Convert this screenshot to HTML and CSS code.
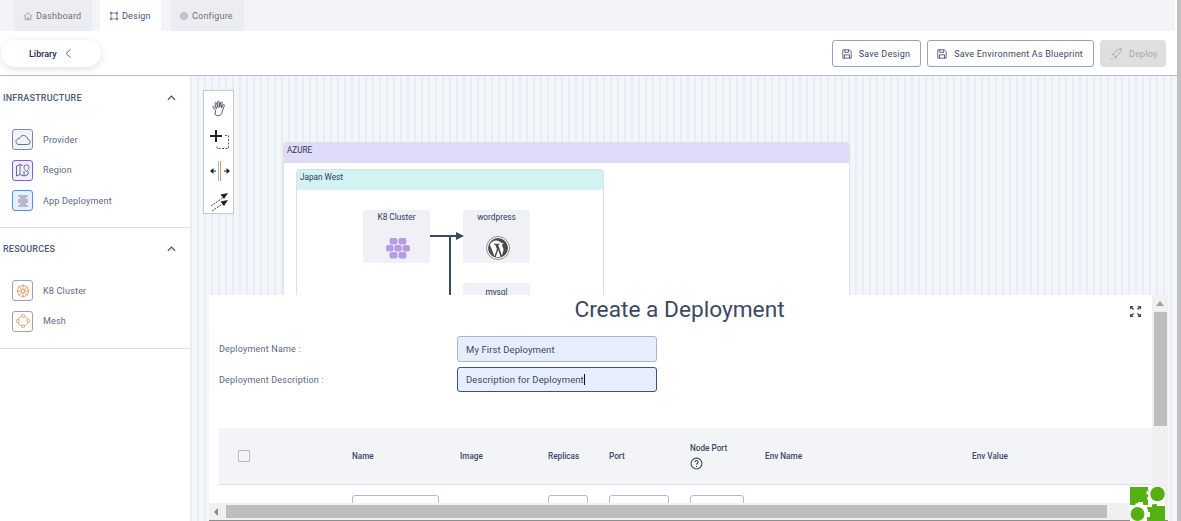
FILE: index.html
```html
<!DOCTYPE html>
<html lang="en">
<head>
  <meta charset="UTF-8">
  <title>Design</title>
  <link rel="stylesheet" href="styles.css">
</head>
<body>
  <div class="app">
    <!-- Tabs -->
    <div class="tabs">
      <div class="tab">
        <svg class="tab-icon" viewBox="0 0 12 12"><path d="M1 6.5 6 2l5 4.500M2.500 5.500V10.500h7V5.500M5 10.500V8h2v2.500"/></svg>
        Dashboard
      </div>
      <div class="tab tab-active">
        <svg class="tab-icon" viewBox="0 0 12 12"><path d="M3 2.500h6M3 9.500h6M2.500 3v6M9.500 3v6"/><rect x="1.500" y="1.500" width="2" height="2"/><rect x="8.500" y="1.500" width="2" height="2"/><rect x="1.500" y="8.500" width="2" height="2"/><rect x="8.500" y="8.500" width="2" height="2"/></svg>
        Design
      </div>
      <div class="tab">
        <svg class="tab-icon" viewBox="0 0 12 12"><circle cx="6" cy="6" r="1.700"/><circle cx="6" cy="6" r="3.800"/><path d="M6 1v1.200M6 9.800V11M1 6h1.200M9.800 6H11M2.500 2.500l.9.900M8.600 8.600l.9.900M2.500 9.500l.9-.9M8.600 3.400l.9-.9"/></svg>
        Configure
      </div>
    </div>

    <!-- Toolbar -->
    <div class="toolbar">
      <div class="library-pill">Library
        <svg class="pill-chevron" viewBox="0 0 6 9"><path d="M5.500 .5 1 4.500l4.500 4"/></svg>
      </div>
      <div class="actions">
        <button class="btn">
          <svg class="btn-icon" viewBox="0 0 12 12"><path d="M1 1h8l2 2v8H1zM3.500 1v3h4.500V1M3 11V7h6v4"/></svg>
          Save Design
        </button>
        <button class="btn">
          <svg class="btn-icon" viewBox="0 0 12 12"><path d="M1 1h8l2 2v8H1zM3.500 1v3h4.500V1M3 11V7h6v4"/></svg>
          Save Environment As Blueprint
        </button>
        <button class="btn btn-disabled">
          <svg class="btn-icon" viewBox="0 0 14 14"><path d="M1 13l2.500-1M3 7.500 6.500 11M3 7.500 8 3c1.500-1.300 3.500-1.800 5.500-2.500-.5 2-1.200 4-2.500 5.500l-4.500 5M1.500 7.500H4.500M6.500 9.500v3.500"/></svg>
          Deploy
        </button>
      </div>
    </div>

    <div class="main">
      <!-- Library sidebar -->
      <aside class="sidebar">
        <section class="group">
          <div class="group-head">INFRASTRUCTURE
            <svg class="group-chevron" viewBox="0 0 10 6"><path d="M1 5l4-4 4 4"/></svg>
          </div>
          <div class="item item-first">
            <span class="item-box box-provider">
              <svg viewBox="0 0 16 16"><path d="M4 12.500h8.500a2.500 2.500 0 0 0 .4-5C12.500 5 10.500 3.500 8.500 3.500 6.500 3.500 5 4.800 4.500 6.500 2.500 6.700 1 8 1 9.500s1 3 3 3z"/></svg>
            </span>Provider
          </div>
          <div class="item">
            <span class="item-box box-region">
              <svg viewBox="0 0 16 16"><path d="M1.500 4v10l3.500-1.500 4 1.500 4-1.500V9M5 2.500 1.500 4M5 2.500V12.500M9 9v5M5 2.500l3 1"/><path d="M11.500 9.500C10 8 9 7 9 5.300a2.500 2.500 0 0 1 5 0c0 1.700-1 2.700-2.500 4.200z"/></svg>
            </span>Region
          </div>
          <div class="item">
            <span class="item-box box-app">
              <svg viewBox="0 0 16 16"><rect class="solid-grey" x="3" y="2" width="10" height="12" rx="1"/><rect class="solid-light" x="2" y="4" width="3" height="2"/><rect class="solid-light" x="2" y="10" width="3" height="2"/><rect class="solid-light" x="11" y="4" width="3" height="2"/><rect class="solid-light" x="11" y="10" width="3" height="2"/></svg>
            </span>App Deployment
          </div>
        </section>
        <section class="group">
          <div class="group-head">RESOURCES
            <svg class="group-chevron" viewBox="0 0 10 6"><path d="M1 5l4-4 4 4"/></svg>
          </div>
          <div class="item item-first">
            <span class="item-box box-res">
              <svg viewBox="0 0 16 16"><circle cx="8" cy="8" r="5.500"/><circle cx="8" cy="8" r="1.800"/><path d="M8 1.500v4.700M8 9.800v4.700M1.500 8h4.700M9.800 8h4.700M3.400 3.400l3.300 3.300M9.300 9.300l3.300 3.300M3.400 12.600l3.300-3.300M9.300 6.700l3.300-3.300"/></svg>
            </span>K8 Cluster
          </div>
          <div class="item">
            <span class="item-box box-res">
              <svg viewBox="0 0 16 16"><circle cx="8" cy="8" r="5"/><rect class="node-dot" x="6.500" y="1.500" width="3" height="2.500" rx="1"/><rect class="node-dot" x="6.500" y="12" width="3" height="2.500" rx="1"/><rect class="node-dot" x="1.500" y="6.500" width="2.500" height="3" rx="1"/><rect class="node-dot" x="12" y="6.500" width="2.500" height="3" rx="1"/></svg>
            </span>Mesh
          </div>
        </section>
      </aside>

      <!-- Canvas -->
      <div class="canvas">
        <div class="tool-strip">
          <svg class="tool" viewBox="0 0 20 20"><path class="tool-line" d="M5.500 11.500 3 8.500c-.8-1 .5-1.800 1.300-1l2.200 2.300L5 4.500c-.3-1.200 1.200-1.500 1.500-.4l1.500 4.400-.4-5.500c-.1-1.200 1.500-1.200 1.600 0l.6 5.300.8-4.600c.2-1.100 1.700-.9 1.500.2l-.7 5 1.600-2.900c.5-1 1.900-.4 1.400.6l-1.800 4.400c-.5 2-.5 3-1.500 4.500-1.500 1.500-4.500 1.500-6 0z"/></svg>
          <svg class="tool" viewBox="0 0 20 20"><path class="tool-bold" d="M6 0v12M0 6h12"/><path class="tool-dash" d="M15 5.500h3.500v13H7V15"/></svg>
          <svg class="tool" viewBox="0 0 20 20"><path class="tool-blue" d="M8.500 0v20"/><path class="tool-orange" d="M10.500 0v20"/><path class="tool-bold-thin" d="M3 10h3M14 10h3"/><path class="tool-fill" d="M3.500 7v6L0 10zM16.500 7v6l3.500-3z"/></svg>
          <svg class="tool" viewBox="0 0 20 20"><path class="tool-thin-dash" d="M1 14 14 5M2 19 14 11"/><path class="tool-fill" d="M18 1l-7.500 1.500 3.500 4.500zM18 8l-7.500 1.500 3.500 4.500z"/></svg>
        </div>

        <div class="provider-box">
          <div class="provider-title">AZURE</div>
          <div class="region-box">
            <div class="region-title">Japan West</div>
            <div class="node node-k8">
              <div class="node-name">K8 Cluster</div>
              <svg class="k8-icon" viewBox="0 0 24 21">
                <rect x="3.500" y="0" width="8" height="6.500" rx="2"/><rect x="12.500" y="0" width="8" height="6.500" rx="2"/>
                <rect x="0" y="7" width="7.500" height="6.500" rx="2"/><rect x="8.250" y="7" width="7.500" height="6.500" rx="2"/><rect x="16.500" y="7" width="7.500" height="6.500" rx="2"/>
                <rect x="3.500" y="14" width="8" height="6.500" rx="2"/><rect x="12.500" y="14" width="8" height="6.500" rx="2"/>
              </svg>
            </div>
            <div class="node node-wp">
              <div class="node-name">wordpress</div>
              <svg class="wp-icon" viewBox="0 0 24 24">
                <circle class="wp-ring" cx="12" cy="12" r="11.500"/>
                <circle class="wp-disc" cx="12" cy="12" r="10"/>
                <path class="wp-w" d="M3.800 8.500 8.500 20.300l2.400-7-1.600-4.500-1.300-.1v-.9h5.600v.9l-1.400.1 3.700 10.700 1.300-4.200c.5-1.800.2-2.800-.3-3.800-.6-1-1-1.600-.8-2.600.2-.9 1-1.400 2-1.200L14 6c-3-2.500-7.500-2-10.200 2.500zM12.200 13.700 9.800 20.800c1.600.5 3.200.4 4.700-.1z"/>
              </svg>
            </div>
            <div class="node node-mysql">
              <div class="node-name">mysql</div>
            </div>
            <div class="edge edge-h"></div>
            <div class="edge edge-v"></div>
            <div class="edge-arrow"></div>
          </div>
        </div>

        <!-- Deployment panel -->
        <div class="panel">
          <div class="panel-body">
            <div class="panel-scroll">
              <div class="panel-head">
                <h1 class="panel-title">Create a Deployment</h1>
                <svg class="expand-icon" viewBox="0 0 14 14"><path d="M1 1h4L3.600 2.400 5.500 4.300 4.300 5.500 2.400 3.600 1 5zM13 1v4L11.600 3.600 9.700 5.500 8.500 4.300l1.900-1.900L9 1zM1 13V9l1.400 1.400 1.900-1.900 1.200 1.200-1.900 1.900L5 13zM13 13H9l1.400-1.400-1.900-1.900 1.200-1.200 1.900 1.900L13 9z"/></svg>
              </div>
              <div class="form-row">
                <label class="form-label">Deployment Name :</label>
                <div class="form-input">My First Deployment</div>
              </div>
              <div class="form-row form-row-focus">
                <label class="form-label">Deployment Description :</label>
                <div class="form-input form-input-focus">Description for Deployment<span class="caret"></span></div>
              </div>
              <div class="table">
                <div class="table-head">
                  <div class="cell cell-check"><span class="checkbox"></span></div>
                  <div class="cell cell-name">Name</div>
                  <div class="cell cell-image">Image</div>
                  <div class="cell cell-replicas">Replicas</div>
                  <div class="cell cell-port">Port</div>
                  <div class="cell cell-node">Node Port
                    <svg class="help-icon" viewBox="0 0 12 12"><circle cx="6" cy="6" r="5"/><path d="M4.500 4.800c0-2 3-2 3-.2 0 1.200-1.500 1.200-1.500 2.600M6 8.300v.9"/></svg>
                  </div>
                  <div class="cell cell-envname">Env Name</div>
                  <div class="cell cell-envvalue">Env Value</div>
                </div>
                <div class="table-row">
                  <div class="cell cell-check"></div>
                  <div class="cell cell-name"><span class="field field-name"></span></div>
                  <div class="cell cell-image"></div>
                  <div class="cell cell-replicas"><span class="field field-replicas"></span></div>
                  <div class="cell cell-port"><span class="field field-port"></span></div>
                  <div class="cell cell-node"><span class="field field-node"></span></div>
                </div>
              </div>
            </div>
            <div class="vscroll">
              <span class="arrow-up"></span>
              <span class="vthumb"></span>
            </div>
          </div>
          <div class="hscroll">
            <span class="arrow-left"></span>
            <span class="hthumb"></span>
          </div>
        </div>

        <!-- Corner logo -->
        <svg class="puzzle" viewBox="0 0 35 34">
          <rect class="puzzle-white" width="35" height="34"/>
          <path class="puzzle-green" d="M0 0H18V4H21V9H18V18H13V15H8V18H0z"/>
          <path class="puzzle-green" d="M17 20H22V17H27V19H35V34H17V30H20V25H17z"/>
          <circle class="puzzle-teeth" cx="27" cy="7.500" r="9.500"/>
          <circle class="puzzle-teeth" cx="8" cy="27" r="9.500"/>
          <circle class="puzzle-white" cx="27" cy="7.500" r="9"/>
          <circle class="puzzle-white" cx="8" cy="27" r="9"/>
          <circle class="puzzle-green" cx="27.500" cy="7" r="7.300"/>
          <circle class="puzzle-green" cx="7.500" cy="27" r="7"/>
        </svg>
      </div>
    </div>
  </div>
  <div class="page-scroll"></div>
</body>
</html>
```

FILE: styles.css
```css
html, body {
  height: 100%;
}
body {
  margin: 0;
  display: flex;
  overflow: hidden;
  background: #fff;
  font-family: Roboto, Arial, sans-serif;
  color: #3d4863;
}
.app {
  flex: 1;
  min-width: 0;
  display: flex;
  flex-direction: column;
  height: 100vh;
}
.page-scroll {
  width: 4px;
  background: #c1c1c1;
}

/* tabs */
.tabs {
  height: 31px;
  flex: none;
  display: flex;
  gap: 8px;
  margin-right: 2px;
  padding-left: 14px;
  background: #f2f4f8;
}
.tab {
  width: 78px;
  box-sizing: border-box;
  padding-left: 9px;
  display: flex;
  align-items: center;
  gap: 3px;
  font-size: 9px;
  letter-spacing: 0.2px;
  color: #6b7280;
  background: #ecedf2;
}
.tab:nth-child(3) {
  width: 73px;
  margin-left: 2px;
  padding-left: 8px;
  gap: 3px;
}
.tab-active {
  width: 61px;
  color: #3d5278;
  background: #fff;
}
.tab-icon {
  width: 10px;
  height: 10px;
  fill: none;
  stroke: currentColor;
  stroke-width: 0.8;
  opacity: 0.85;
}

/* toolbar */
.toolbar {
  height: 45px;
  flex: none;
  box-sizing: border-box;
  display: flex;
  align-items: flex-start;
  justify-content: space-between;
  padding: 9px 11px 0 1px;
  background: #fff;
  border-bottom: 1px solid #b4bac9;
}
.library-pill {
  width: 100px;
  height: 27px;
  box-sizing: border-box;
  padding-left: 28px;
  display: flex;
  align-items: center;
  gap: 8px;
  border-radius: 14px;
  font-size: 9px;
  font-weight: 500;
  color: #1d2a4d;
  background: #fff;
  box-shadow: 0 2px 7px rgba(60, 70, 100, 0.16);
}
.pill-chevron {
  width: 6px;
  height: 9px;
  fill: none;
  stroke: #56627f;
  stroke-width: 1;
}
.actions {
  display: flex;
  gap: 6px;
}
.btn {
  height: 27px;
  box-sizing: border-box;
  display: flex;
  align-items: center;
  gap: 7px;
  padding: 0 10px 0 9px;
  border: 1px solid #9aa3bb;
  border-radius: 3px;
  background: #fff;
  color: #3d4863;
  font-family: inherit;
  font-size: 9px;
  letter-spacing: 0.22px;
}
.btn-icon {
  width: 10px;
  height: 10px;
  flex: none;
  fill: none;
  stroke: currentColor;
  stroke-width: 1;
}
.btn-disabled {
  width: 66px;
  border-color: #dfdfdf;
  background: #dfdfdf;
  color: #a8a8a8;
}
.btn-disabled .btn-icon {
  width: 12px;
  height: 12px;
}

/* sidebar */
.main {
  flex: 1;
  min-height: 0;
  display: flex;
}
.sidebar {
  width: 190px;
  flex: none;
  box-sizing: border-box;
  background: #fff;
}
.group {
  height: 152px;
  box-sizing: border-box;
  border-bottom: 1px solid #dcdee3;
}
.group + .group {
  height: 121px;
}
.group-head {
  display: flex;
  align-items: center;
  justify-content: space-between;
  height: 15px;
  padding: 14px 14px 0 3px;
  font-size: 9px;
  font-weight: 500;
  letter-spacing: 0.2px;
  color: #4e5a74;
}
.group + .group .group-head {
  padding-top: 13px;
}
.item {
  height: 21px;
  margin: 0 0 9.5px 12px;
  display: flex;
  align-items: center;
  gap: 10px;
  font-size: 9px;
  letter-spacing: 0.2px;
  color: #5b6880;
}
.item-first {
  margin-top: 24px;
}
.group + .group .item-first {
  margin-top: 24px;
}
.group-chevron {
  width: 9px;
  height: 6px;
  fill: none;
  stroke: #3d4863;
  stroke-width: 1.3;
}
.item-box {
  width: 21px;
  height: 21px;
  box-sizing: border-box;
  display: flex;
  align-items: center;
  justify-content: center;
  border: 1px solid #9aa3bb;
  border-radius: 3px;
}
.item-box svg {
  width: 16px;
  height: 16px;
  fill: none;
  stroke: #566080;
  stroke-width: 0.9;
}
.box-provider {
  background: #f1f3fa;
  border-color: #7d88ad;
}
.box-region {
  background: #f2eefe;
  border-color: #7a5ce6;
}
.box-app {
  background: #e6effc;
  border-color: #4f8ef0;
}
.box-app svg {
  stroke: none;
}
.solid-grey {
  fill: #b7b9c9;
}
.solid-light {
  fill: #e6effc;
}
.box-res svg {
  stroke: #e39a62;
}
.node-dot {
  fill: #fff;
}

/* canvas */
.canvas {
  flex: 1;
  min-width: 0;
  position: relative;
  overflow: hidden;
  background-color: #f2f5fa;
  background-image: repeating-linear-gradient(90deg, #e9ecf2 0, #e9ecf2 2px, transparent 2px, transparent 7px);
}
.tool-strip {
  position: absolute;
  left: 13px;
  top: 14px;
  width: 31px;
  height: 124px;
  display: flex;
  flex-direction: column;
  align-items: flex-start;
  gap: 11px;
  padding: 8px 0 0 6px;
  box-sizing: border-box;
  background: #fff;
  border: 1px solid #c9c9c9;
}
.tool {
  width: 20px;
  height: 20px;
  flex: none;
  overflow: visible;
}
.tool-line {
  fill: #fff;
  stroke: #454b5c;
  stroke-width: 0.9;
}
.tool-bold {
  fill: none;
  stroke: #222;
  stroke-width: 2;
}
.tool-dash {
  fill: none;
  stroke: #5a5a5a;
  stroke-width: 1;
  stroke-dasharray: 2 1.5;
}
.tool-orange {
  fill: none;
  stroke: #e39a62;
  stroke-width: 1;
}
.tool-blue {
  fill: none;
  stroke: #8cc0e8;
  stroke-width: 1;
}
.tool-bold-thin {
  fill: none;
  stroke: #222;
  stroke-width: 1;
}
.tool-fill {
  fill: #222;
}
.tool-thin-dash {
  fill: none;
  stroke: #333;
  stroke-width: 0.9;
  stroke-dasharray: 2 1;
}

/* diagram */
.provider-box {
  position: absolute;
  left: 93px;
  top: 66px;
  width: 567px;
  height: 400px;
  box-sizing: border-box;
  background: #fff;
  border: 1px solid #dcdfe8;
  border-radius: 3px;
}
.provider-title {
  height: 20px;
  padding: 2px 3px 0;
  box-sizing: border-box;
  background: #e0dbf9;
  font-size: 8.2px;
  line-height: 11px;
  color: #2f3a5a;
  border-radius: 3px 3px 0 0;
}
.region-box {
  position: absolute;
  left: 12px;
  top: 26px;
  width: 308px;
  height: 300px;
  box-sizing: border-box;
  background: #fff;
  border: 1px solid #dcdfe8;
  border-radius: 3px;
}
.region-title {
  height: 20px;
  padding: 2px 3px 0;
  box-sizing: border-box;
  background: #d2f2f4;
  font-size: 8.2px;
  line-height: 11px;
  color: #2f3a5a;
  border-radius: 3px 3px 0 0;
}
.node {
  position: absolute;
  width: 67px;
  height: 53px;
  text-align: center;
  background: #f0f1f6;
  border-radius: 2px;
}
.node-name {
  padding-top: 1px;
  font-size: 8.3px;
  line-height: 12px;
  color: #2f3a5a;
}
.node-k8 {
  left: 66px;
  top: 40px;
}
.node-wp {
  left: 166px;
  top: 40px;
}
.node-mysql {
  left: 166px;
  top: 113px;
  padding-top: 2px;
}
.k8-icon {
  position: absolute;
  left: 23px;
  top: 28px;
  width: 24px;
  height: 21px;
  fill: #b79be3;
}
.wp-icon {
  position: absolute;
  left: 23px;
  top: 26px;
  width: 24px;
  height: 24px;
}
.wp-ring {
  fill: #fff;
  stroke: #8a8a8a;
  stroke-width: 1;
}
.wp-disc {
  fill: #4a4a4a;
}
.wp-w {
  fill: #fff;
}
.edge {
  position: absolute;
  background: #3d4863;
}
.edge-h {
  left: 133px;
  top: 65px;
  width: 27px;
  height: 2px;
}
.edge-v {
  left: 152px;
  top: 65px;
  width: 2px;
  height: 130px;
}
.edge-arrow {
  position: absolute;
  left: 159px;
  top: 62px;
  border-left: 8px solid #3d4863;
  border-top: 4px solid transparent;
  border-bottom: 4px solid transparent;
}

/* panel */
.panel {
  position: absolute;
  left: 19px;
  top: 219px;
  width: 959px;
  height: 226px;
  display: flex;
  flex-direction: column;
  background: #fff;
}
.panel-body {
  flex: 1;
  min-height: 0;
  display: flex;
}
.panel-scroll {
  flex: 1;
  min-width: 0;
  overflow: hidden;
}
.panel-head {
  position: relative;
  height: 41px;
  text-align: center;
}
.panel-title {
  margin: 0;
  padding: 2px 2px 0 0;
  font-size: 22.7px;
  line-height: 26px;
  font-weight: 400;
  color: #3d4863;
}
.expand-icon {
  position: absolute;
  right: 10px;
  top: 10px;
  width: 13px;
  height: 13px;
  fill: #3d4863;
}
.form-row {
  display: flex;
  align-items: center;
  height: 26px;
  margin: 0 0 5px 10px;
}
.form-row-focus {
  height: 25px;
}
.form-label {
  width: 238px;
  font-size: 9px;
  letter-spacing: 0.2px;
  color: #5b6880;
}
.form-input {
  width: 200px;
  height: 100%;
  line-height: 26px;
  padding-left: 8px;
  box-sizing: border-box;
  background: #e7eefb;
  border: 1px solid #aab4cc;
  border-radius: 3px;
  font-size: 9.5px;
  letter-spacing: 0.1px;
  color: #3d4863;
}
.form-input-focus {
  line-height: 24px;
  border-color: #3d5278;
}
.caret {
  display: inline-block;
  width: 1px;
  height: 11px;
  background: #111;
  vertical-align: -2px;
}
.table {
  margin: 36px 0 0 10px;
}
.table-head {
  height: 56px;
  display: flex;
  align-items: center;
  background: #f2f4f8;
  border-bottom: 1px solid #dcdee3;
  font-size: 8.2px;
  font-weight: 500;
  color: #3d4863;
}
.table-row {
  display: flex;
  padding-top: 10px;
}
.cell {
  flex: none;
}
.cell-check {
  width: 133px;
  padding-left: 19px;
  box-sizing: border-box;
  display: flex;
}
.cell-name {
  width: 108px;
}
.cell-image {
  width: 88px;
}
.cell-replicas {
  width: 61px;
}
.cell-port {
  width: 81px;
}
.cell-node {
  width: 75px;
}
.cell-envname {
  width: 207px;
}
.checkbox {
  width: 10px;
  height: 10px;
  border: 1px solid #b4bac9;
  border-radius: 1px;
  background: #f2f4f8;
}
.help-icon {
  display: block;
  margin-top: 4px;
  width: 13px;
  height: 13px;
  fill: none;
  stroke: #3d4863;
  stroke-width: 1;
}
.field {
  display: block;
  height: 30px;
  box-sizing: border-box;
  background: #fff;
  border: 1px solid #b4bac9;
  border-radius: 3px;
}
.field-name {
  width: 87px;
}
.field-replicas {
  width: 40px;
}
.field-port {
  width: 60px;
}
.field-node {
  width: 54px;
}

/* scrollbars */
.vscroll {
  width: 16px;
  flex: none;
  display: flex;
  flex-direction: column;
  align-items: center;
  background: #f0f0f0;
}
.arrow-up {
  margin: 6px 0;
  border-bottom: 5px solid #a3a3a3;
  border-left: 4px solid transparent;
  border-right: 4px solid transparent;
}
.vthumb {
  width: 13px;
  height: 114px;
  background: #bebebe;
}
.hscroll {
  height: 18px;
  flex: none;
  display: flex;
  align-items: center;
  background: #f0f0f0;
  border-bottom: 1px solid #8d8d8d;
  box-sizing: border-box;
}
.arrow-left {
  margin: 0 8px 0 5px;
  border-right: 4px solid #8a8a8a;
  border-top: 4px solid transparent;
  border-bottom: 4px solid transparent;
}
.hthumb {
  width: 881px;
  height: 13px;
  background: #bebebe;
}

/* logo */
.puzzle {
  position: absolute;
  left: 940px;
  top: 411px;
  width: 35px;
  height: 34px;
}
.puzzle-green {
  fill: #56b014;
}
.puzzle-white {
  fill: #fff;
}
.puzzle-teeth {
  fill: none;
  stroke: #fff;
  stroke-width: 2.5;
  stroke-dasharray: 3 3;
}
```
